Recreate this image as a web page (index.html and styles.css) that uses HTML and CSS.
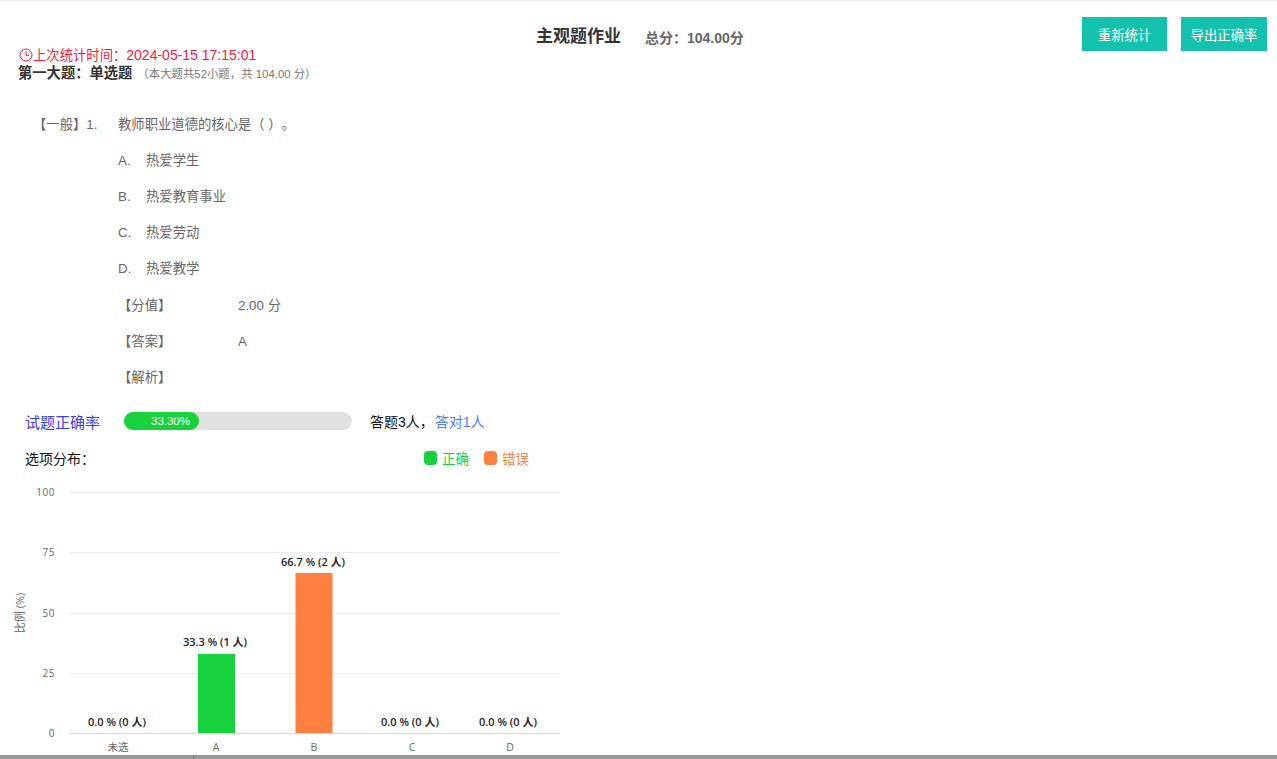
FILE: index.html
```html
<!DOCTYPE html>
<html lang="zh-CN">
<head>
  <meta charset="UTF-8">
  <title>主观题作业</title>
  <link rel="stylesheet" href="styles.css">
</head>
<body>
  <div class="page">
    <header class="top">
      <div class="heading">
        <h1>主观题作业</h1>
        <span class="total">总分：104.00分</span>
      </div>
      <div class="actions">
        <button class="btn">重新统计</button>
        <button class="btn btn-wide">导出正确率</button>
      </div>
    </header>

    <div class="stat-time">
      <svg class="clock" width="14" height="14" viewBox="0 0 14 14">
        <circle cx="7" cy="7" r="6" fill="none" stroke="#f5183f" stroke-width="1"/>
        <path d="M7 3.2V7.4H10.2" fill="none" stroke="#f5183f" stroke-width="1"/>
      </svg>
      <span>上次统计时间：<span class="stat-value">2024-05-15 17:15:01</span></span>
    </div>

    <div class="section-title">
      <b>第一大题：单选题</b>
      <small>（本大题共52小题，共 104.00 分）</small>
    </div>

    <div class="question">
      <div class="q-row">
        <span class="q-level">【一般】1.</span>
        <span>教师职业道德的核心是（ ）。</span>
      </div>
      <ul class="options">
        <li><span class="opt-key">A.</span>热爱学生</li>
        <li><span class="opt-key">B.</span>热爱教育事业</li>
        <li><span class="opt-key">C.</span>热爱劳动</li>
        <li><span class="opt-key">D.</span>热爱教学</li>
      </ul>
      <div class="meta">
        <div class="meta-row"><span class="meta-key">【分值】</span><span>2.00 分</span></div>
        <div class="meta-row"><span class="meta-key">【答案】</span><span>A</span></div>
        <div class="meta-row"><span class="meta-key">【解析】</span></div>
      </div>
    </div>

    <div class="rate">
      <span class="rate-label">试题正确率</span>
      <div class="progress"><div class="progress-fill" style="width: 75px">33.30%</div></div>
      <span class="rate-count">答题3人，</span>
      <span class="rate-right">答对1人</span>
    </div>

    <div class="dist">
      <span class="dist-label">选项分布：</span>
      <div class="legend">
        <span class="legend-item ok"><i></i>正确</span>
        <span class="legend-item bad"><i></i>错误</span>
      </div>
    </div>

    <svg class="chart" width="570" height="290" viewBox="0 0 570 290">
      <g class="grid">
        <line x1="69" x2="560" y1="16.5" y2="16.5"/>
        <line x1="69" x2="560" y1="76.5" y2="76.5"/>
        <line x1="69" x2="560" y1="137.5" y2="137.5"/>
        <line x1="69" x2="560" y1="197.5" y2="197.5"/>
      </g>
      <line class="axis" x1="69" x2="560" y1="257.5" y2="257.5"/>
      <g class="ticks">
        <text x="55" y="20">100</text>
        <text x="55" y="80">75</text>
        <text x="55" y="141">50</text>
        <text x="55" y="201">25</text>
        <text x="55" y="261">0</text>
      </g>
      <text class="y-name" transform="translate(24 137) rotate(-90)">比例 (%)</text>
      <rect class="bar-ok" x="198" y="178" width="37" height="79"/>
      <rect class="bar-bad" x="295.500" y="97" width="37" height="160"/>
      <g class="values">
        <text x="117" y="250">0.0 % (0 人)</text>
        <text x="215" y="170">33.3 % (1 人)</text>
        <text x="313" y="90">66.7 % (2 人)</text>
        <text x="410" y="250">0.0 % (0 人)</text>
        <text x="508" y="250">0.0 % (0 人)</text>
      </g>
      <g class="cats">
        <text x="118" y="275">未选</text>
        <text x="216" y="275">A</text>
        <text x="314" y="275">B</text>
        <text x="412" y="275">C</text>
        <text x="510" y="275">D</text>
      </g>
    </svg>
  </div>
  <div class="hscroll"></div>
</body>
</html>
```

FILE: styles.css
```css
html, body {
  height: 100%;
}

body {
  margin: 0;
  display: flex;
  flex-direction: column;
  overflow: hidden;
  background: #fff;
  color: #666;
  font-family: "Liberation Sans", "Noto Sans CJK SC", sans-serif;
  font-size: 13.33px;
  text-spacing-trim: space-all;
}

.page {
  flex: 1;
  min-height: 0;
  overflow: hidden;
  border-top: 1px solid #eee;
}

.top {
  display: flex;
  justify-content: flex-end;
  position: relative;
  padding: 16px 10px 0 0;
}

.heading {
  position: absolute;
  left: 536px;
  top: 24px;
  display: flex;
  align-items: center;
  gap: 24px;
}

h1 {
  margin: 0;
  font-size: 17px;
  line-height: 24px;
  color: #333;
}

.total {
  font-size: 14px;
  font-weight: bold;
  color: #666;
}

.actions {
  display: flex;
  gap: 14px;
}

.btn {
  height: 34px;
  width: 85px;
  padding: 0;
  border: none;
  background: #13c2ad;
  color: #fff;
  font-family: inherit;
  font-size: 13.33px;
}

.btn-wide {
  width: 86px;
}

.stat-time {
  display: flex;
  align-items: center;
  margin: -4px 0 0 19px;
  height: 16px;
  color: #f5183f;
  line-height: 16px;
}

.stat-value {
  font-size: 14px;
}

.section-title {
  margin: 2px 0 0 18px;
  height: 16px;
  line-height: 16px;
  font-size: 14.3px;
  color: #333;
}

.section-title small {
  margin-left: 1px;
  font-size: 11.4px;
  color: #777;
}

.question {
  padding: 34px 0 0 36px;
  line-height: 20px;
}

.q-row {
  display: flex;
  margin-left: -3px;
}

.q-level {
  width: 85px;
}

.options {
  margin: 0;
  padding: 0 0 0 82px;
  list-style: none;
}

.options li {
  display: flex;
  margin-top: 16px;
}

.opt-key {
  width: 28px;
}

.meta {
  padding: 1px 0 0 82px;
}

.meta-row {
  display: flex;
  margin-top: 16px;
}

.meta-key {
  width: 120px;
}

.rate {
  display: flex;
  align-items: center;
  margin: 23px 0 0 25px;
  height: 20px;
  font-size: 14px;
}

.rate-label {
  width: 99px;
  color: #3b3bf0;
  font-size: 15px;
}

.progress {
  width: 228px;
  height: 18px;
  border-radius: 9px;
  background: #e0e0e0;
}

.progress-fill {
  box-sizing: border-box;
  height: 18px;
  padding-right: 9px;
  border-radius: 9px;
  background: #17d23d;
  color: #fff;
  font-size: 11.5px;
  line-height: 18px;
  text-align: right;
}

.rate-count {
  margin-left: 18px;
  color: #111;
}

.rate-right {
  margin-left: 1px;
  color: #4d7cfe;
}

.dist {
  display: flex;
  align-items: center;
  width: 504px;
  margin: 17px 0 0 25px;
  height: 20px;
  font-size: 14px;
  color: #111;
}

.legend {
  display: flex;
  gap: 15px;
  margin-left: auto;
}

.legend-item {
  display: flex;
  align-items: center;
  gap: 5px;
  font-size: 13.5px;
}

.legend-item i {
  width: 13px;
  height: 14px;
  border-radius: 4px;
  background: currentColor;
}

.ok {
  color: #17d23d;
}

.bad {
  color: #ff7f41;
}

.chart {
  display: block;
  margin-top: 8px;
}

.grid line {
  stroke: #ebebeb;
  stroke-width: 1;
}

.axis {
  stroke: #d5d9e4;
  stroke-width: 1;
}

.ticks text {
  text-anchor: end;
  font-family: "Open Sans", sans-serif;
  font-size: 10px;
  letter-spacing: 0.5px;
  fill: #666;
}

.y-name {
  text-anchor: middle;
  font-family: "Open Sans", "Noto Sans CJK SC", sans-serif;
  font-size: 11px;
  fill: #666;
}

.bar-ok {
  fill: #17d23d;
}

.bar-bad {
  fill: #ff7f41;
}

.values text {
  text-anchor: middle;
  font-family: "Open Sans", "Noto Sans CJK SC", sans-serif;
  font-size: 11px;
  font-weight: 600;
  fill: #222;
}

.cats text {
  text-anchor: middle;
  font-family: "Open Sans", "Noto Sans CJK SC", sans-serif;
  font-size: 10.5px;
  fill: #666;
}

.hscroll {
  flex: none;
  height: 4px;
  background: linear-gradient(to right, #999 193px, #777 193px, #777 194px, #999 194px);
}
```
